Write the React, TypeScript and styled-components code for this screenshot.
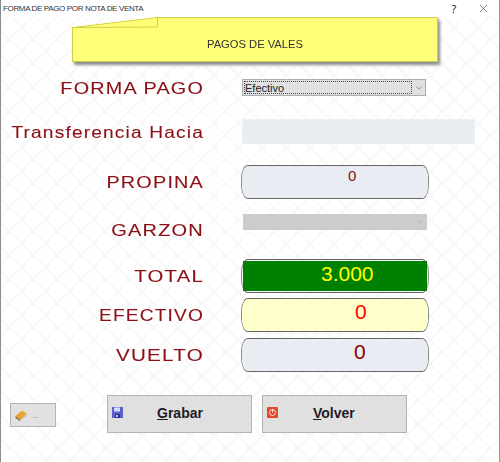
import React from 'react'
import styled, { createGlobalStyle } from 'styled-components'
import { ChevronDown, X } from 'lucide-react'

const GlobalStyle = createGlobalStyle`
  html, body {
    margin: 0;
    padding: 0;
    background: #fff;
  }
`

const Window = styled.div`
  display: flex;
  flex-direction: column;
  box-sizing: border-box;
  width: 500px;
  height: 462px;
  overflow: hidden;
  border-left: 1px solid #8c8c8c;
  border-right: 1px solid #9a9a9a;
  background-color: #fff;
  background-image:
    repeating-linear-gradient(45deg, transparent 0 15px, #f8f8f8 15px 17px),
    repeating-linear-gradient(-45deg, transparent 0 15px, #f8f8f8 15px 17px);
`

const TitleBar = styled.div`
  display: flex;
  align-items: center;
  justify-content: space-between;
  height: 17px;
  padding: 0 9px 0 2px;
  background: #fff;
  font-family: 'Liberation Sans', sans-serif;
  font-size: 8px;
  letter-spacing: -0.35px;
  color: #333;
`

const TitleActions = styled.div`
  display: flex;
  align-items: center;
  gap: 21px;
  font-family: 'Noto Sans', sans-serif;
  font-size: 11px;
  color: #222;
`

const NoteShadow = styled.div`
  margin-left: 71px;
  width: 366px;
  height: 45px;
  filter: drop-shadow(2px 3px 1.5px rgba(60, 60, 60, 0.6));
`

const Note = styled.div`
  position: relative;
  display: flex;
  align-items: center;
  justify-content: center;
  height: 100%;
  padding-top: 9px;
  box-sizing: border-box;
  background: #ffff78;
  clip-path: polygon(0 10px, 85px 0, 100% 0, 100% 100%, 0 100%);
  font-family: 'Liberation Sans', sans-serif;
  font-size: 11.2px;
  color: #333;
`

const NoteFold = styled.svg`
  position: absolute;
  top: 0;
  left: 0;
`

const Row = styled.div<{ $top: number }>`
  display: grid;
  grid-template-columns: 203px 1fr;
  column-gap: 37px;
  align-items: center;
  margin-top: ${p => p.$top}px;
`

const Label = styled.div<{ $shift?: number; $scale: number }>`
  position: relative;
  top: ${p => p.$shift ?? 0}px;
  height: 16px;
  text-align: right;
  white-space: nowrap;
  font-family: 'Liberation Sans', sans-serif;
  font-size: 16.5px;
  line-height: 16px;
  letter-spacing: 1px;
  color: #8b0f14;
  -webkit-text-stroke: 0.1px #8b0f14;
  transform: scaleX(${p => p.$scale});
  transform-origin: right center;
`

const Combo = styled.div<{ $disabled?: boolean }>`
  display: flex;
  align-items: center;
  box-sizing: border-box;
  width: 184px;
  height: ${p => (p.$disabled ? 16 : 17)}px;
  margin-left: ${p => (p.$disabled ? 2 : 1)}px;
  padding: 1px 0 1px 1px;
  border: 1px solid ${p => (p.$disabled ? '#cccccc' : '#adadad')};
  background: ${p => (p.$disabled ? '#cccccc' : '#e1e1e1')};
  font-family: 'Liberation Sans', sans-serif;
  font-size: 11px;
  color: #222;
`

const ComboText = styled.div`
  flex: 1;
  height: 100%;
  box-sizing: border-box;
  border: 1px dotted #444;
  line-height: 12px;
`

const ComboArrow = styled.div<{ $disabled?: boolean }>`
  display: flex;
  justify-content: center;
  width: 13px;
  margin-left: auto;
  color: ${p => (p.$disabled ? '#b5b5b5' : '#777')};
`

const TextBox = styled.div`
  width: 233px;
  height: 25px;
  margin-left: 1px;
  box-sizing: border-box;
  border: 1px solid #eef0f2;
  background: #e9ecf0;
`

const MoneyField = styled.div`
  box-sizing: border-box;
  width: 188px;
  height: 34px;
  border: 1px solid #666;
  border-left-color: #888;
  border-right-color: #888;
  border-radius: 7px / 14px;
  background: transparent;
`

const MoneyValue = styled.div<{ $bg: string; $color: string; $left: number; $square?: boolean; $pixel?: boolean }>`
  box-sizing: border-box;
  height: ${p => (p.$square ? 'calc(100% - 2px)' : '100%')};
  margin: ${p => (p.$square ? '1px 1px' : '0')};
  padding-left: ${p => p.$left}px;
  border-radius: ${p => (p.$square ? '0' : '6px / 13px')};
  background: ${p => p.$bg};
  color: ${p => p.$color};
  font-family: 'Liberation Sans', sans-serif;
  font-size: ${p => (p.$pixel ? 15 : 21)}px;
  line-height: ${p => (p.$pixel ? 20 : 26)}px;
`

const Footer = styled.div`
  display: flex;
  align-items: flex-start;
  margin-top: 23px;
  padding-left: 9px;
`

const SmallButton = styled.div`
  display: flex;
  align-items: center;
  gap: 5px;
  box-sizing: border-box;
  width: 46px;
  height: 24px;
  margin-top: 8px;
  padding-left: 4px;
  border: 1px solid #b4b4b4;
  background: #e1e1e1;
  font-family: 'Liberation Sans', sans-serif;
  font-size: 8px;
  color: #777;
`

const ActionButton = styled.div<{ $left: number; $gap: number }>`
  display: flex;
  align-items: center;
  box-sizing: border-box;
  width: 145px;
  height: 38px;
  margin-left: ${p => p.$left}px;
  padding: 0 0 3px 4px;
  gap: ${p => p.$gap}px;
  border: 1px solid #b4b4b4;
  background: #e0e0e0;
  font-family: 'Liberation Sans', sans-serif;
  font-size: 14px;
  font-weight: 700;
  color: #1c1c28;
`

const FloppyIcon = () => (
  <svg width="11" height="11" viewBox="0 0 11 11">
    <rect width="11" height="11" fill="#5a5fd0" />
    <rect x="2" y="0.5" width="6" height="4" fill="#d8dcf4" />
    <rect x="3" y="7" width="5" height="4" fill="#2c3080" />
    <rect x="4" y="8" width="2" height="2" fill="#c8ccec" />
  </svg>
)

const PowerIcon = () => (
  <svg width="11" height="11" viewBox="0 0 11 11">
    <rect width="11" height="11" rx="1" fill="#e0492c" />
    <circle cx="5.5" cy="5.5" r="3" fill="none" stroke="#ffe2d8" strokeWidth="1" />
    <path d="M5.5 2v3.5" stroke="#ffe2d8" strokeWidth="1" />
  </svg>
)

const BookIcon = () => (
  <svg width="12" height="11" viewBox="0 0 12 11">
    <path d="M0.5 6 L7 0.5 L11.5 3.5 L5 9.5 Z" fill="#f0a030" />
    <path d="M0.5 6 L5 9.5 L5 11 L0.5 8 Z" fill="#8a6a3a" />
    <path d="M5 9.5 L11.5 3.5 L11.5 5.5 L5 11 Z" fill="#c9b48a" />
  </svg>
)

const App: React.FC = () => {
  return (
    <>
      <GlobalStyle />
      <Window>
        <TitleBar>
          FORMA DE PAGO POR NOTA DE VENTA
          <TitleActions>
            ?
            <X size={13} strokeWidth={1} />
          </TitleActions>
        </TitleBar>

        <NoteShadow>
          <Note>
            PAGOS DE VALES
            <NoteFold width="366" height="45" viewBox="0 0 366 45">
              <path d="M0.5 10.5 L85.5 0.5 L85.5 10 L0.5 10.5 L0.5 44.5 L365.5 44.5 L365.5 0.5 L85.5 0.5" fill="none" stroke="#cfcf4e" />
            </NoteFold>
          </Note>
        </NoteShadow>

        <Row $top={17}>
          <Label $scale={1.2}>FORMA PAGO</Label>
          <Combo>
            <ComboText>Efectivo</ComboText>
            <ComboArrow><ChevronDown size={10} /></ComboArrow>
          </Combo>
        </Row>
        <Row $top={23}>
          <Label $scale={1.16}>Transferencia Hacia</Label>
          <TextBox />
        </Row>
        <Row $top={21}>
          <Label $scale={1.2}>PROPINA</Label>
          <MoneyField>
            <MoneyValue $bg="#e9ecf2" $color="#8b0f14" $left={106} $pixel>0</MoneyValue>
          </MoneyField>
        </Row>
        <Row $top={15}>
          <Label $shift={8} $scale={1.21}>GARZON</Label>
          <Combo $disabled>
            <ComboArrow $disabled><ChevronDown size={10} /></ComboArrow>
          </Combo>
        </Row>
        <Row $top={29}>
          <Label $scale={1.23}>TOTAL</Label>
          <MoneyField>
            <MoneyValue $bg="#008000" $color="#ffff00" $left={78} $square>3.000</MoneyValue>
          </MoneyField>
        </Row>
        <Row $top={5}>
          <Label $scale={1.16}>EFECTIVO</Label>
          <MoneyField>
            <MoneyValue $bg="#ffffcc" $color="#ff0000" $left={113}>0</MoneyValue>
          </MoneyField>
        </Row>
        <Row $top={6}>
          <Label $scale={1.25}>VUELTO</Label>
          <MoneyField>
            <MoneyValue $bg="#e9ecf2" $color="#8b0000" $left={112}>0</MoneyValue>
          </MoneyField>
        </Row>

        <Footer>
          <SmallButton>
            <BookIcon />
            ...
          </SmallButton>
          <ActionButton $left={51} $gap={34}>
            <FloppyIcon />
            <span><u>G</u>rabar</span>
          </ActionButton>
          <ActionButton $left={10} $gap={35}>
            <PowerIcon />
            <span><u>V</u>olver</span>
          </ActionButton>
        </Footer>
      </Window>
    </>
  )
}

export default App
